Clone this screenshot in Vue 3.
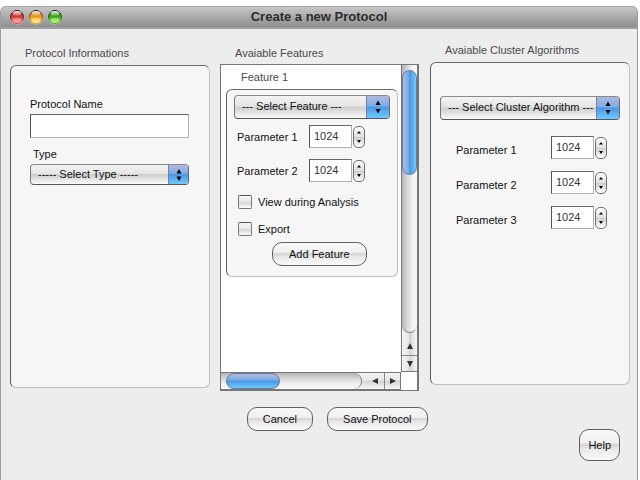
<script setup>
import { reactive } from 'vue'

const lights = [
  { id: 'close', label: 'Close', dark: '#a0181c', mid: '#cc4040', light: '#ffaaa4' },
  { id: 'minimize', label: 'Minimize', dark: '#b8620c', mid: '#f09a1e', light: '#fff58a' },
  { id: 'zoom', label: 'Zoom', dark: '#1c7a14', mid: '#45a81f', light: '#c0f77e' },
]

const protocol = reactive({ name: '', type: '' })

const feature = reactive({
  kind: '',
  params: [
    { id: 'feature-p1', label: 'Parameter 1', value: 1024 },
    { id: 'feature-p2', label: 'Parameter 2', value: 1024 },
  ],
  options: [
    { id: 'view-analysis', label: 'View during Analysis', checked: false },
    { id: 'export', label: 'Export', checked: false },
  ],
})

const cluster = reactive({
  kind: '',
  params: [
    { id: 'cluster-p1', label: 'Parameter 1', value: 1024 },
    { id: 'cluster-p2', label: 'Parameter 2', value: 1024 },
    { id: 'cluster-p3', label: 'Parameter 3', value: 1024 },
  ],
})

function step(param, amount) {
  param.value = Number(param.value) + amount
}
</script>

<template>
  <main class="window">
    <header class="titlebar">
      <div class="lights">
        <button v-for="l in lights" :key="l.id" type="button" class="light" :aria-label="l.label">
          <svg viewBox="0 0 16 16" width="16" height="16">
            <defs>
              <linearGradient :id="l.id + '-body'" x1="0" y1="0" x2="0" y2="1">
                <stop offset="0" :stop-color="l.dark" />
                <stop offset="0.5" :stop-color="l.mid" />
                <stop offset="1" :stop-color="l.light" />
              </linearGradient>
              <linearGradient :id="l.id + '-rim'" x1="0" y1="0" x2="0" y2="1">
                <stop offset="0" stop-color="#1c1010" />
                <stop offset="0.6" :stop-color="l.dark" />
                <stop offset="1" :stop-color="l.mid" />
              </linearGradient>
              <linearGradient :id="l.id + '-shine'" x1="0" y1="0" x2="0" y2="1">
                <stop offset="0" stop-color="#fff" stop-opacity="0.95" />
                <stop offset="1" stop-color="#fff" stop-opacity="0.15" />
              </linearGradient>
            </defs>
            <circle cx="8" cy="8.5" r="7.2" fill="#d2d2d2" opacity="0.7" />
            <circle cx="8" cy="8" r="6.5" :fill="`url(#${l.id}-body)`" :stroke="`url(#${l.id}-rim)`" />
            <ellipse cx="8" cy="4.4" rx="4.4" ry="2.4" :fill="`url(#${l.id}-shine)`" />
            <ellipse cx="8" cy="11.5" rx="4.4" ry="2.5" :fill="l.light" opacity="0.6" />
          </svg>
        </button>
      </div>
      <h1 class="title">Create a new Protocol</h1>
    </header>

    <div class="columns">
      <section class="column">
        <h2 class="heading">Protocol Informations</h2>
        <div class="panel panel-main panel-protocol">
          <label class="label" for="protocol-name">Protocol Name</label>
          <input id="protocol-name" v-model="protocol.name" class="text-input" type="text" />
          <label class="label label-type" for="protocol-type">Type</label>
          <span class="select select-small">
            <select id="protocol-type" v-model="protocol.type">
              <option value="">----- Select Type -----</option>
            </select>
            <span class="cap"><svg viewBox="0 0 6 14" width="6" height="14"><path d="M3 1 5.5 5.5h-5zM3 13 .5 8.5h5z" /></svg></span>
          </span>
        </div>
      </section>

      <section class="column">
        <h2 class="heading">Avaiable Features</h2>
        <div class="scroller">
          <div class="view">
            <h3 class="feature-title">Feature 1</h3>
            <div class="panel panel-feature">
              <span class="select">
                <select v-model="feature.kind" aria-label="Feature">
                  <option value="">--- Select Feature ---</option>
                </select>
                <span class="cap"><svg viewBox="0 0 6 14" width="6" height="14"><path d="M3 .5 5.5 5h-5zM3 13.5 .5 9h5z" /></svg></span>
              </span>
              <div class="params params-feature">
                <div v-for="p in feature.params" :key="p.id" class="param">
                  <label class="label" :for="p.id">{{ p.label }}</label>
                  <input :id="p.id" v-model="p.value" class="number" type="text" inputmode="numeric" />
                  <span class="stepper">
                    <button type="button" aria-label="Increase" @click="step(p, 1)"><svg viewBox="0 0 4 3" width="4" height="3"><path d="M1.5 .5h1L4 2.5H0z" /></svg></button>
                    <button type="button" aria-label="Decrease" @click="step(p, -1)"><svg viewBox="0 0 4 3" width="4" height="3"><path d="M0 0h4L2 3z" /></svg></button>
                  </span>
                </div>
              </div>
              <div class="checks">
                <label v-for="o in feature.options" :key="o.id" class="check">
                  <input v-model="o.checked" type="checkbox" />
                  {{ o.label }}
                </label>
              </div>
              <button type="button" class="button add">Add Feature</button>
            </div>
          </div>
          <div class="vbar">
            <div class="vtrack"><div class="vthumb"></div></div>
            <button type="button" class="vup" aria-label="Scroll up"><svg viewBox="0 0 8 8" width="8" height="8"><path d="M4 1 7 7H1z" /></svg></button>
            <button type="button" class="vdown" aria-label="Scroll down"><svg viewBox="0 0 8 8" width="8" height="8"><path d="M4 7 7 1H1z" /></svg></button>
          </div>
          <div class="hbar">
            <div class="htrack"><div class="hthumb"></div></div>
            <button type="button" class="hleft" aria-label="Scroll left"><svg viewBox="0 0 8 8" width="8" height="8"><path d="M1 4 7 1v6z" /></svg></button>
            <button type="button" class="hright" aria-label="Scroll right"><svg viewBox="0 0 8 8" width="8" height="8"><path d="M7 4 1 1v6z" /></svg></button>
          </div>
          <div class="corner"></div>
        </div>
      </section>

      <section class="column column-cluster">
        <h2 class="heading">Avaiable Cluster Algorithms</h2>
        <div class="panel panel-main panel-cluster">
          <span class="select">
            <select v-model="cluster.kind" aria-label="Cluster algorithm">
              <option value="">--- Select Cluster Algorithm ---</option>
            </select>
            <span class="cap"><svg viewBox="0 0 6 14" width="6" height="14"><path d="M3 .5 5.5 5h-5zM3 13.5 .5 9h5z" /></svg></span>
          </span>
          <div class="params params-cluster">
            <div v-for="p in cluster.params" :key="p.id" class="param">
              <label class="label" :for="p.id">{{ p.label }}</label>
              <input :id="p.id" v-model="p.value" class="number" type="text" inputmode="numeric" />
              <span class="stepper">
                <button type="button" aria-label="Increase" @click="step(p, 1)"><svg viewBox="0 0 4 3" width="4" height="3"><path d="M1.5 .5h1L4 2.5H0z" /></svg></button>
                <button type="button" aria-label="Decrease" @click="step(p, -1)"><svg viewBox="0 0 4 3" width="4" height="3"><path d="M0 0h4L2 3z" /></svg></button>
              </span>
            </div>
          </div>
        </div>
      </section>
    </div>

    <footer class="footer">
      <div class="actions">
        <button type="button" class="button">Cancel</button>
        <button type="button" class="button">Save Protocol</button>
      </div>
      <button type="button" class="button help">Help</button>
    </footer>
  </main>
</template>

<style>
body {
  background: #fff;
}
#app {
  display: flex;
  min-height: 100vh;
  box-sizing: border-box;
  padding: 6px 2px 0 0;
}
</style>

<style scoped>
* {
  box-sizing: border-box;
}
.window {
  flex: 1;
  border: 1px solid #9c9c9c;
  border-width: 0 1px;
  border-radius: 6px 6px 0 0;
  background: #ededed;
  color: #111;
  font: 11px/16px "Liberation Sans", Arial, sans-serif;
}
button,
input,
select {
  margin: 0;
  font: inherit;
  color: inherit;
}
button {
  padding: 0;
}
.titlebar {
  display: grid;
  grid-template-columns: 1fr auto 1fr;
  align-items: center;
  height: 23px;
  padding: 0 8px 1px;
  border-top: 1px solid #a4a4a4;
  border-bottom: 2px solid #a0a0a0;
  border-radius: 5px 5px 0 0;
  background: linear-gradient(#c6c6c6, #8e8e8e);
}
.lights {
  display: flex;
  gap: 3px;
}
.light {
  width: 16px;
  height: 16px;
  border: 0;
  background: none;
}
.light svg {
  display: block;
}
.title {
  margin: 0;
  color: #2c2c2c;
  font-size: 13px;
  line-height: 16px;
}
.columns {
  display: grid;
  grid-template-columns: repeat(3, minmax(0, 1fr));
  gap: 10px;
  padding: 0 7px 0 9px;
}
.column {
  padding-top: 16px;
}
.column-cluster {
  padding-top: 13px;
}
.heading,
.feature-title {
  margin: 0;
  padding-left: 15px;
  color: #4a4a4a;
  font-size: 11px;
  font-weight: normal;
}
.heading {
  margin-bottom: 4px;
}
.panel {
  display: flex;
  flex-direction: column;
  border: 1px solid;
  border-color: #6a6a6a #c0c0c0 #c0c0c0 #5c5c5c;
  border-radius: 6px;
  background: #f6f6f6;
}
.panel-main {
  min-height: 323px;
}
.panel-protocol {
  padding: 30px 20px 0 19px;
}
.panel-cluster {
  padding: 33px 9px 0 9px;
}
.text-input,
.number {
  border: 1px solid;
  border-color: #666 #b0b0b0 #b0b0b0 #555;
  border-radius: 0;
  background: #fff;
}
.text-input {
  width: 100%;
  height: 24px;
  margin: 2px 0 8px;
  padding: 0 5px;
}
.label-type {
  margin-bottom: 2px;
  padding-left: 3px;
}
.select {
  display: grid;
  height: 24px;
  overflow: hidden;
  border: 1px solid;
  border-color: #8a8a8a #6a6a6a #555 #777;
  border-radius: 4px;
  background: linear-gradient(#f4f4f4, #e4e4e4 46%, #cdcdcd 50%, #fbfbfb);
}
.select-small {
  height: 21px;
}
.select select {
  grid-area: 1 / 1;
  width: 100%;
  min-width: 0;
  padding: 0 0 2px 7px;
  border: 0;
  appearance: none;
  background: none;
}
.cap {
  grid-area: 1 / 1;
  justify-self: end;
  display: grid;
  place-items: center;
  width: 23px;
  border-left: 1px solid #77829a;
  background: linear-gradient(#b0b9e2, #7cabe4 46%, #4b97e6 50%, #6ecbff);
  pointer-events: none;
}
.select-small .cap {
  width: 20px;
}
.params {
  display: grid;
}
.params-feature {
  gap: 11px;
  padding: 6px 25px 0 3px;
}
.params-cluster {
  gap: 12px;
  padding: 16px 13px 0 16px;
}
.param {
  display: flex;
  align-items: center;
  height: 23px;
}
.param .label {
  flex: 1;
}
.params-cluster .label {
  padding-top: 4px;
}
.number {
  width: 43px;
  height: 23px;
  padding: 0 4px 2px;
  color: #333;
}
.stepper {
  display: grid;
  width: 12px;
  height: 22px;
  margin-left: 1px;
  padding: 1px 0;
  border: 1px solid #6e6e6e;
  border-radius: 5px;
  background: linear-gradient(#fff, #e0e0e0 48%, #cfcfcf 52%, #fff);
}
.stepper button {
  display: grid;
  place-items: center;
  border: 0;
  background: none;
}
.checks {
  display: grid;
  gap: 11px;
  padding: 12px 4px 5px;
}
.check {
  display: flex;
  align-items: center;
  gap: 6px;
}
.check input {
  width: 14px;
  height: 14px;
  border: 1px solid;
  border-color: #555 #777 #777;
  border-radius: 2px;
  appearance: none;
  background: linear-gradient(#f8f8f8, #e8e8e8 48%, #d6d6d6 54%, #fbfbfb);
}
.check input:checked {
  background: #5aa5ee;
}
.button {
  height: 24px;
  padding: 0 15px 1px;
  border: 1px solid #606060;
  border-radius: 10px;
  background: linear-gradient(#f8f8f8, #f0f0f0 42%, #d2d2d2 50%, #e8e8e8 62%, #fafafa);
}
.add {
  align-self: flex-start;
  margin-left: 38px;
  padding: 0 16px 1px;
}
.scroller {
  display: grid;
  grid-template: minmax(307px, 1fr) 18px / minmax(0, 1fr) 16px;
  margin: -1px 1px 0 0;
  border: 1px solid #777;
  border-right-width: 2px;
  background: #fff;
}
.view {
  padding: 4px 3px 0 5px;
}
.panel-feature {
  min-height: 188px;
  margin-top: 4px;
  padding: 5px 7px 9px;
}
.vbar,
.hbar {
  display: flex;
}
.vbar {
  flex-direction: column;
  border: 1px solid #777;
  border-width: 0 0 1px 1px;
  background: linear-gradient(90deg, #f4f4f4, #e6e6e6 46%, #d2d2d2 50%, #f8f8f8);
}
.vtrack {
  flex: 1;
  padding-top: 5px;
  border-bottom: 1px solid #808080;
  border-radius: 0 0 8px 8px;
  background: linear-gradient(90deg, #b4b4b4, #dcdcdc 40%, #f2f2f2 70%, #fafafa);
}
.vthumb {
  height: 105px;
  border: 1px solid #66789c;
  border-radius: 8px;
  background: linear-gradient(90deg, #b0b9e2, #7cabe4 42%, #4b97e6 50%, #6ecbff);
}
.hbar {
  border: 1px solid #777;
  border-width: 1px 1px 1px 0;
  background: linear-gradient(#f4f4f4, #e6e6e6 46%, #d2d2d2 50%, #f8f8f8);
}
.htrack {
  display: flex;
  flex: 1;
  padding-left: 5px;
  border-right: 1px solid #808080;
  border-radius: 0 8px 8px 0;
  background: linear-gradient(#b4b4b4, #dcdcdc 40%, #f2f2f2 70%, #fafafa);
}
.hthumb {
  width: 54px;
  border: 1px solid #66789c;
  border-radius: 8px;
  background: linear-gradient(#b0b9e2, #7cabe4 42%, #4b97e6 50%, #6ecbff);
}
.vbar button,
.hbar button {
  display: grid;
  place-items: center;
  border: 0;
  background: none;
  fill: #333;
}
.vbar .vup {
  height: 23px;
  padding-top: 4px;
  border-bottom: 1px solid #888;
}
.vbar .vdown {
  height: 15px;
}
.hbar .hleft {
  width: 23px;
  padding-left: 4px;
  border-right: 1px solid #888;
}
.hbar .hright {
  width: 15px;
}
.footer {
  display: flex;
  align-items: flex-start;
  margin-top: 16px;
  padding: 0 17px 19px 94px;
}
.actions {
  display: flex;
  flex: 1;
  justify-content: center;
  gap: 14px;
}
.help {
  height: 32px;
  margin-top: 22px;
  padding: 0 8px 1px;
}
</style>
